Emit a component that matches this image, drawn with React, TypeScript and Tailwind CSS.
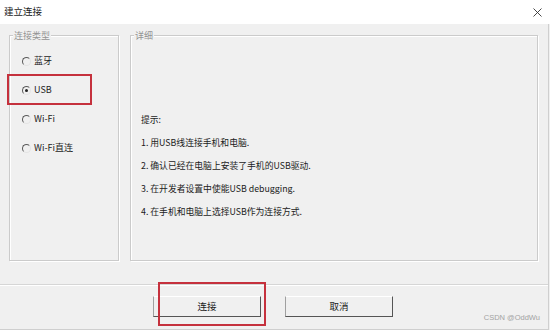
import { useState } from "react";

const options = ["蓝牙", "USB", "Wi-Fi", "Wi-Fi直连"];

const tips = [
  "1. 用USB线连接手机和电脑.",
  "2. 确认已经在电脑上安装了手机的USB驱动.",
  "3. 在开发者设置中使能USB debugging.",
  "4. 在手机和电脑上选择USB作为连接方式.",
];

function Radio({ checked }: { checked: boolean }) {
  return (
    <span className="relative flex h-[9px] w-[9px] items-center justify-center rounded-full border border-t-[#5a5a5a] border-l-[#5a5a5a] border-r-[#e4e4e4] border-b-[#e4e4e4] bg-[#f0f0f0]">
      {checked && <span className="h-[3px] w-[3px] rounded-full bg-[#222]" />}
    </span>
  );
}

export default function App() {
  const [mode, setMode] = useState("USB");

  return (
    <div className="flex h-[330px] w-[550px] flex-col overflow-hidden bg-[#f0f0f0] font-['Noto_Sans_CJK_SC','Microsoft_YaHei',sans-serif] text-[9px] text-[#1c1c1c]">
      <div className="flex h-[24px] shrink-0 items-center justify-between bg-white pl-[4px] pr-[8px]">
        <span className="text-[9.5px] leading-none">建立连接</span>
        <svg width="9" height="9" viewBox="0 0 9 9" className="stroke-[#333]">
          <path d="M0.5 0.5 L8.5 8.5 M8.5 0.5 L0.5 8.5" strokeWidth="0.9" fill="none" />
        </svg>
      </div>

      <div className="mr-[1px] flex flex-1 flex-col border-b border-r border-[#cfcfcf]">
        <div className="flex gap-[11px] pl-[9px] pt-[11px]">
          <div className="relative h-[226px] w-[110px] border border-[#cbcbcb] shadow-[inset_1px_1px_0_#fff,1px_1px_0_#fff]">
            <span className="absolute -top-[7px] left-[3px] bg-[#f0f0f0] px-[1px] leading-[13px] text-[#939393]">连接类型</span>
            <div className="flex flex-col gap-[15px] pl-[12px] pt-[18px]">
              {options.map((o) => (
                <button
                  key={o}
                  onClick={() => setMode(o)}
                  className="flex h-[14px] items-center gap-[3px] text-left leading-[14px]"
                >
                  <Radio checked={mode === o} />
                  <span>{o}</span>
                </button>
              ))}
            </div>
            <div className="pointer-events-none absolute left-[-3px] top-[38px] h-[31px] w-[85px] border-2 border-[#c5313d]" />
          </div>

          <div className="relative h-[226px] w-[408px] border border-[#cbcbcb] shadow-[inset_1px_1px_0_#fff,1px_1px_0_#fff]">
            <span className="absolute -top-[7px] left-[3px] bg-[#f0f0f0] px-[1px] leading-[13px] text-[#939393]">详细</span>
            <div className="flex flex-col gap-[9px] pl-[10px] pt-[77px] text-[8.8px] leading-[14px]">
              <span>提示:</span>
              {tips.map((t) => (
                <span key={t}>{t}</span>
              ))}
            </div>
          </div>
        </div>

        <div className="mt-[23px] h-[1px] bg-[#d6d6d6] shadow-[0_1px_0_#fff]" />

        <div className="relative flex gap-[24px] pl-[153px] pt-[11px]">
          <div className="relative">
            <button className="flex h-[21px] w-[108px] items-center justify-center border border-t-[#fff] border-l-[#a0a0a0] border-r-[#555] border-b-[#555] bg-[#f0f0f0] text-[9.5px]">
              连接
            </button>
            <div className="pointer-events-none absolute -bottom-[9px] -right-[5px] -top-[14px] left-[5px] border-2 border-[#c5313d]" />
          </div>
          <button className="flex h-[21px] w-[108px] items-center justify-center border border-t-[#fff] border-l-[#a0a0a0] border-r-[#555] border-b-[#555] bg-[#f0f0f0] text-[9.5px]">
            取消
          </button>
          <span className="absolute right-[8px] top-[27px] font-['Liberation_Sans',sans-serif] text-[7.5px] text-[#a3a3a3]">CSDN @OddWu</span>
        </div>
      </div>
    </div>
  );
}
